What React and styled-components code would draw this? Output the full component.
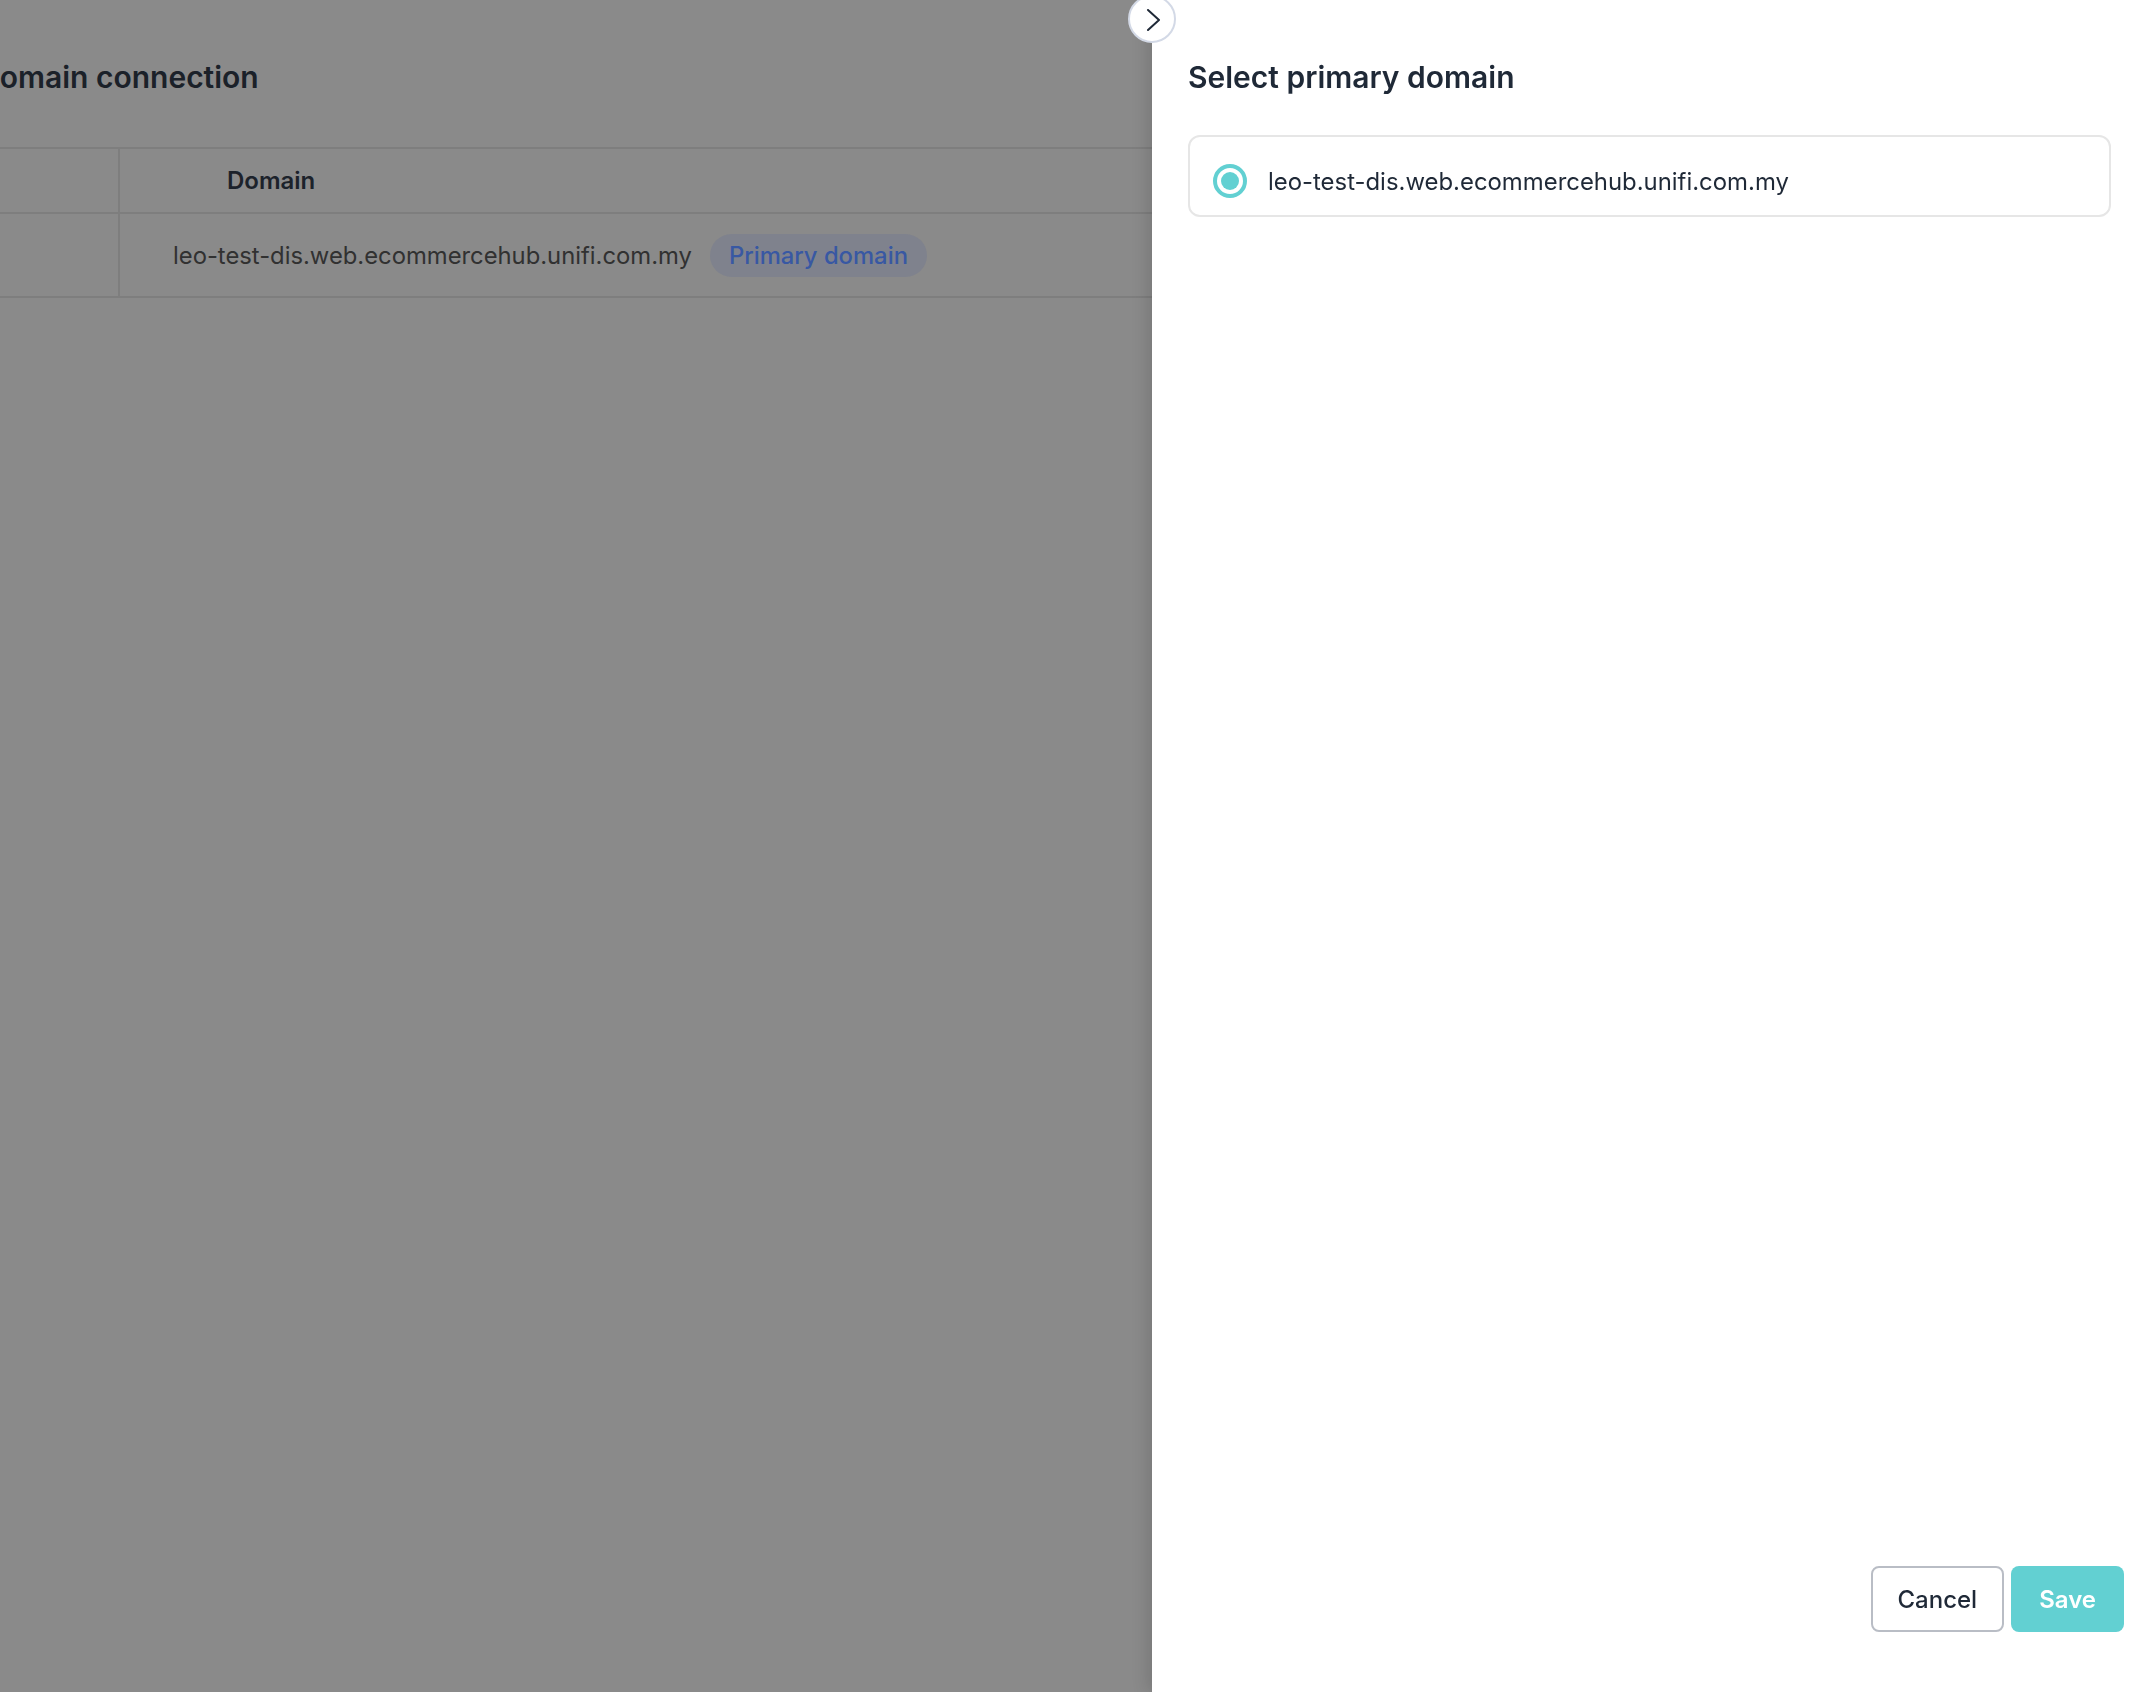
import React, { useState } from "react";
import styled, { createGlobalStyle } from "styled-components";

const GlobalStyle = createGlobalStyle`
  html, body {
    margin: 0;
    padding: 0;
    background: #8a8a8a;
    font-family: Inter, "Noto Sans", "Liberation Sans", sans-serif;
    overflow: hidden;
  }
  * { box-sizing: border-box; }
`;

const domains = ["leo-test-dis.web.ecommercehub.unifi.com.my"];

const App = () => {
  const [selected, setSelected] = useState(domains[0]);

  return (
    <>
      <GlobalStyle />
      <PageWrapper>
        <PageTitle>Domain connection</PageTitle>
        <Table>
          <thead>
            <tr>
              <HeadCell $first />
              <HeadCell>Domain</HeadCell>
            </tr>
          </thead>
          <tbody>
            {domains.map((d) => (
              <tr key={d}>
                <BodyCell $first />
                <BodyCell>
                  <DomainRow>
                    <span>{d}</span>
                    {d === selected && <Badge>Primary domain</Badge>}
                  </DomainRow>
                </BodyCell>
              </tr>
            ))}
          </tbody>
        </Table>
      </PageWrapper>

      <Drawer>
        <CollapseButton>
          <svg width="16" height="22" viewBox="0 0 16 22" fill="none">
            <polyline
              points="2,1 13,11 2,21"
              stroke="#1f2937"
              strokeWidth="2"
              strokeLinecap="round"
              strokeLinejoin="round"
            />
          </svg>
        </CollapseButton>
        <DrawerTitle>Select primary domain</DrawerTitle>
        <OptionList>
          {domains.map((d) => (
            <OptionCard key={d} onClick={() => setSelected(d)}>
              <Radio $checked={d === selected} />
              <OptionLabel>{d}</OptionLabel>
            </OptionCard>
          ))}
        </OptionList>
        <Footer>
          <CancelButton>Cancel</CancelButton>
          <SaveButton>Save</SaveButton>
        </Footer>
      </Drawer>
    </>
  );
};

const PageWrapper = styled.div`
  height: 100vh;
  padding-top: 59px;
  margin-left: -40px;
`;

const PageTitle = styled.h1`
  margin: 0;
  padding-left: 18px;
  font-size: 30px;
  line-height: 36px;
  font-weight: 600;
  color: #1b2129;
`;

const Table = styled.table`
  margin-top: 52px;
  width: calc(100% + 40px);
  border-collapse: collapse;
  border-top: 2px solid #7e7e7e;
`;

const HeadCell = styled.th`
  height: 65px;
  width: ${(p) => (p.$first ? "159px" : "auto")};
  padding: 0 0 0 ${(p) => (p.$first ? "0" : "107px")};
  text-align: left;
  font-size: 24px;
  font-weight: 600;
  color: #1c222b;
  border-bottom: 2px solid #7e7e7e;
  border-right: ${(p) => (p.$first ? "2px solid #7e7e7e" : "none")};
`;

const BodyCell = styled.td`
  height: 84px;
  padding: 0 0 0 ${(p) => (p.$first ? "0" : "53px")};
  border-bottom: 2px solid #7e7e7e;
  border-right: ${(p) => (p.$first ? "2px solid #7e7e7e" : "none")};
`;

const DomainRow = styled.div`
  display: flex;
  align-items: center;
  gap: 18px;
  font-size: 23.8px;
  color: #313131;
`;

const Badge = styled.span`
  display: inline-flex;
  align-items: center;
  height: 43px;
  padding: 0 19px;
  border-radius: 22px;
  background: #7f828d;
  color: #3858a3;
  font-weight: 500;
`;

const Drawer = styled.aside`
  position: fixed;
  top: 0;
  right: 0;
  bottom: 0;
  width: 1004px;
  display: flex;
  flex-direction: column;
  padding: 59px 32px 60px 36px;
  background: #ffffff;
  box-shadow: -4px 0 16px rgba(0, 0, 0, 0.14);
`;

const CollapseButton = styled.button`
  position: absolute;
  left: -24px;
  top: -5px;
  width: 48px;
  height: 48px;
  display: flex;
  align-items: center;
  justify-content: center;
  padding: 2px 0 0 4px;
  border-radius: 50%;
  border: 2px solid #d3d9e6;
  background: #ffffff;
  cursor: pointer;
`;

const DrawerTitle = styled.h2`
  margin: 0;
  font-size: 30px;
  line-height: 36px;
  font-weight: 600;
  color: #1f2937;
`;

const OptionList = styled.div`
  flex: 1;
  margin-top: 40px;
  margin-right: 13px;
`;

const OptionCard = styled.label`
  display: flex;
  align-items: center;
  gap: 21px;
  height: 82px;
  padding: 10px 23px 0;
  border: 2px solid #e6e6e6;
  border-radius: 12px;
  cursor: pointer;
`;

const Radio = styled.span`
  flex: none;
  width: 34px;
  height: 34px;
  border-radius: 50%;
  border: 4px solid ${(p) => (p.$checked ? "#62d0d2" : "#c9ced6")};
  background: #ffffff;
  display: flex;
  align-items: center;
  justify-content: center;

  &::after {
    content: "";
    width: 18px;
    height: 18px;
    border-radius: 50%;
    background: ${(p) => (p.$checked ? "#62d0d2" : "transparent")};
  }
`;

const OptionLabel = styled.span`
  font-size: 23.9px;
  color: #1f2937;
`;

const Footer = styled.div`
  display: flex;
  justify-content: flex-end;
  gap: 7px;
`;

const CancelButton = styled.button`
  height: 66px;
  padding: 0 25px;
  border: 2px solid #b9bdc5;
  border-radius: 8px;
  background: #ffffff;
  font-family: inherit;
  font-size: 24px;
  font-weight: 500;
  color: #1f2937;
  cursor: pointer;
`;

const SaveButton = styled.button`
  height: 66px;
  padding: 0 28px;
  border: none;
  border-radius: 8px;
  background: #62d0d2;
  font-family: inherit;
  font-size: 24px;
  font-weight: 600;
  color: #ffffff;
  cursor: pointer;
`;

export default App;
